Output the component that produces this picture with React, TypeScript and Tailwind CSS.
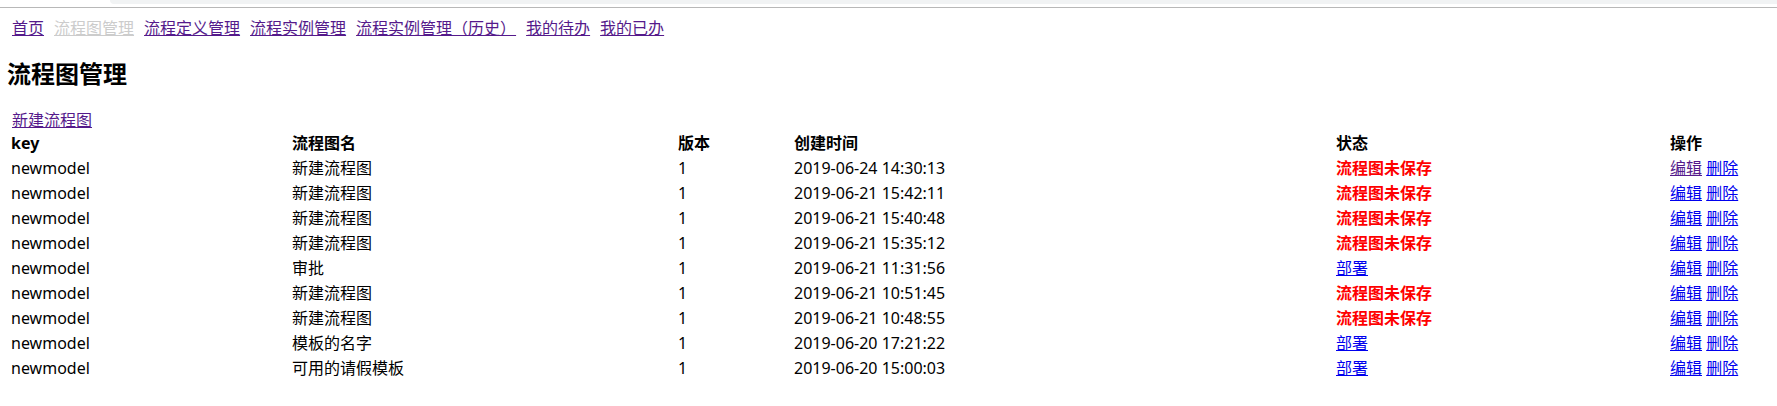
const rows = [
  { name: "新建流程图", time: "2019-06-24 14:30:13", saved: false },
  { name: "新建流程图", time: "2019-06-21 15:42:11", saved: false },
  { name: "新建流程图", time: "2019-06-21 15:40:48", saved: false },
  { name: "新建流程图", time: "2019-06-21 15:35:12", saved: false },
  { name: "审批", time: "2019-06-21 11:31:56", saved: true },
  { name: "新建流程图", time: "2019-06-21 10:51:45", saved: false },
  { name: "新建流程图", time: "2019-06-21 10:48:55", saved: false },
  { name: "模板的名字", time: "2019-06-20 17:21:22", saved: true },
  { name: "可用的请假模板", time: "2019-06-20 15:00:03", saved: true },
];

const nav = [
  { label: "首页" },
  { label: "流程图管理", active: true },
  { label: "流程定义管理" },
  { label: "流程实例管理" },
  { label: "流程实例管理（历史）" },
  { label: "我的待办" },
  { label: "我的已办" },
];

const cols = "grid grid-cols-[281px_386px_116px_542px_334px_1fr] pl-[11px] leading-[25px] h-[25px]";

export default function App() {
  return (
    <div
      className="w-[1777px] h-[406px] bg-white text-black text-[16px] overflow-hidden"
      style={{ fontFamily: '"Noto Sans", "Noto Sans CJK SC", sans-serif' }}
    >
      {/* 浏览器顶部残留 */}
      <div className="relative h-[8px]">
        <div className="absolute left-[110px] right-0 top-0 h-[4px] bg-[#f1f3f4] rounded-bl-[6px]" />
        <div className="absolute left-0 right-0 top-[7px] h-[1px] bg-[#b8b8b8]" />
      </div>

      <div className="mt-[10px] pl-[7px] flex leading-[20px] h-[20px]">
        {nav.map((n) => (
          <a
            key={n.label}
            href="#"
            className={
              "mx-[5px] underline whitespace-nowrap " +
              (n.active ? "text-[#cccccc]" : "text-[#551a8b]")
            }
          >
            {n.label}
          </a>
        ))}
      </div>

      <h2 className="mt-[20px] pl-[7px] text-[24px] font-bold leading-[32px] h-[32px]">
        流程图管理
      </h2>

      <div className="mt-[20px] pl-[12px] leading-[20px] h-[20px]">
        <a href="#" className="underline text-[#551a8b]">
          新建流程图
        </a>
      </div>

      <div className="mt-[1px]">
        <div className={cols + " font-bold"}>
          <span>key</span>
          <span>流程图名</span>
          <span>版本</span>
          <span>创建时间</span>
          <span>状态</span>
          <span>操作</span>
        </div>
        {rows.map((r, i) => (
          <div key={i} className={cols}>
            <span>newmodel</span>
            <span>{r.name}</span>
            <span>1</span>
            <span>{r.time}</span>
            <span>
              {r.saved ? (
                <a href="#" className="underline text-[#0000ee]">
                  部署
                </a>
              ) : (
                <span className="text-[#ff0000] font-bold">流程图未保存</span>
              )}
            </span>
            <span className="whitespace-nowrap">
              <a
                href="#"
                className={"underline " + (i === 0 ? "text-[#551a8b]" : "text-[#0000ee]")}
              >
                编辑
              </a>{" "}
              <a href="#" className="underline text-[#0000ee]">
                删除
              </a>
            </span>
          </div>
        ))}
      </div>
    </div>
  );
}
